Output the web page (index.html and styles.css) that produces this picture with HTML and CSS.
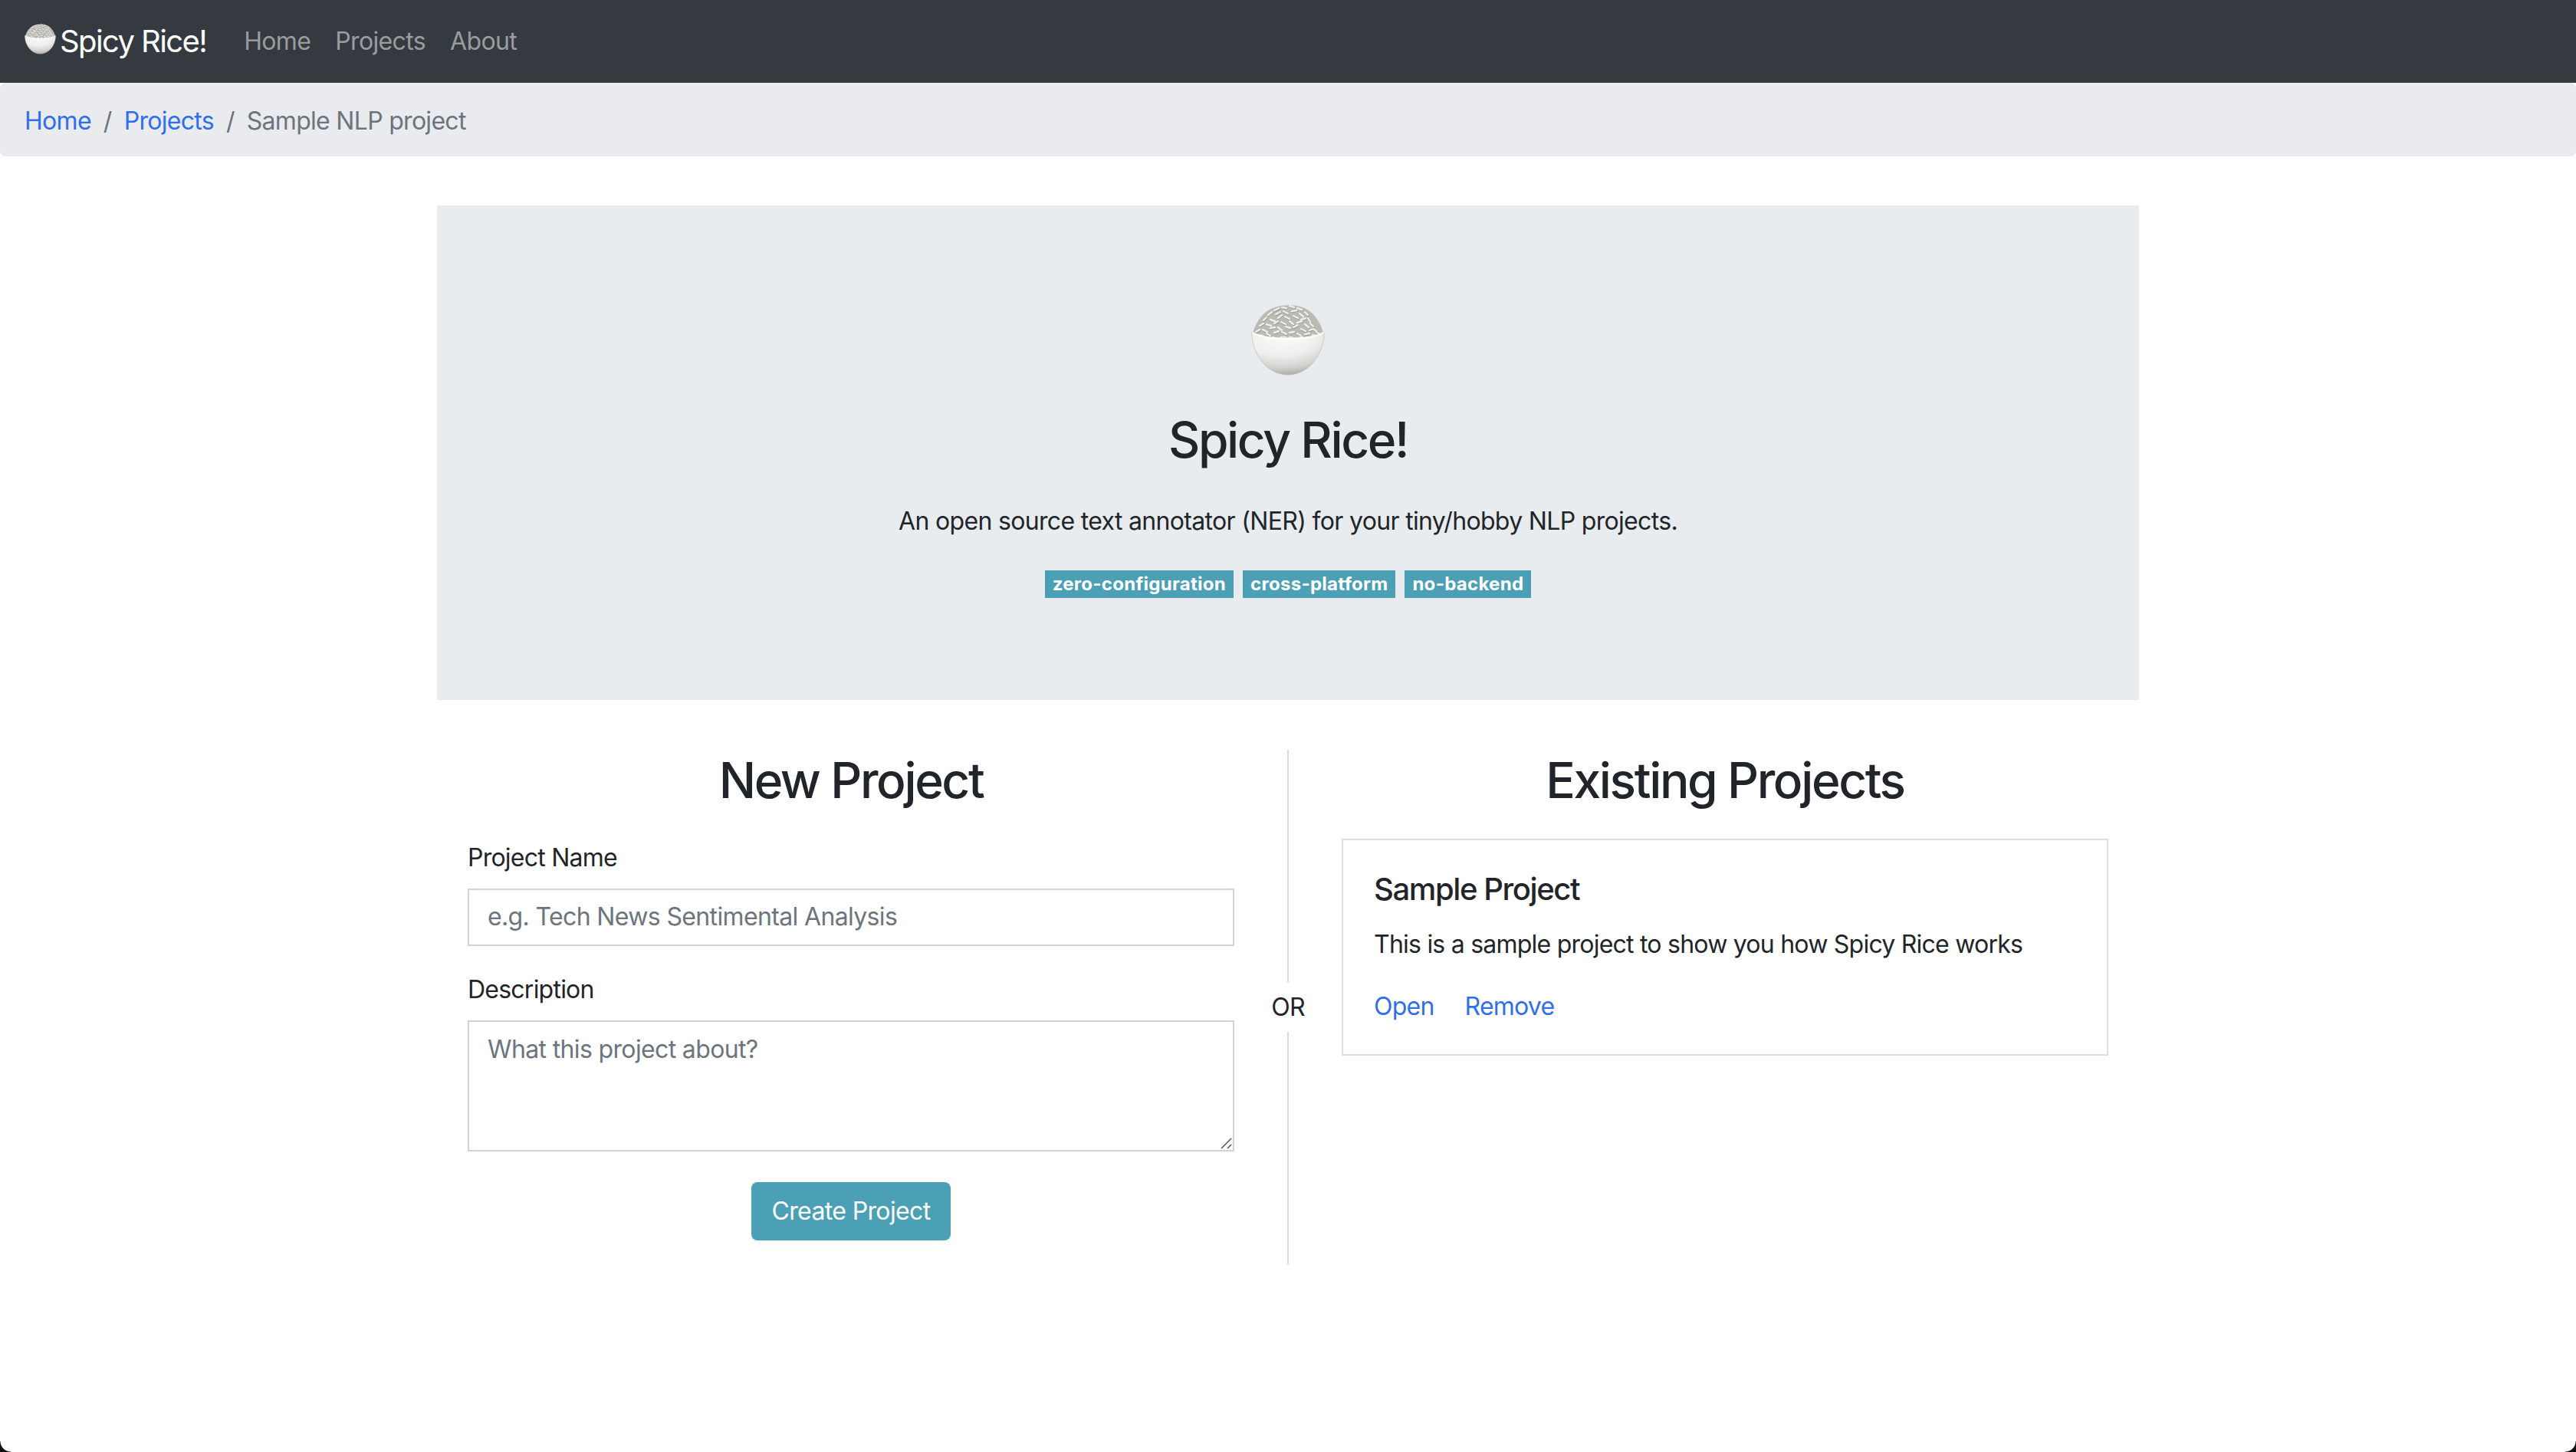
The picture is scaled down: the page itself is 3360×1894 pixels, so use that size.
FILE: index.html
```html
<!DOCTYPE html>
<html lang="en">
<head>
    <meta charset="UTF-8">
    <meta name="viewport" content="width=device-width, initial-scale=1.0">
    <title>Spicy Rice!</title>
    <link rel="stylesheet" href="styles.css">
</head>
<body>

    <!-- rice bowl drawn once, used in the navbar and the jumbotron -->
    <svg class="icon-defs" aria-hidden="true">
        <defs>
            <radialGradient id="bowlFill" cx="0.42" cy="0.05" r="1">
                <stop offset="0" stop-color="#fcfcfb"/>
                <stop offset="0.5" stop-color="#efefed"/>
                <stop offset="0.78" stop-color="#d3d2cf"/>
                <stop offset="1" stop-color="#a3a29f"/>
            </radialGradient>
            <path id="grains" d="M42 15l6 -3M52 11l6 1M62 9l6 2M72 12l6 2M82 17l4 4M34 21l5 -4M44 20l6 -3M54 16l6 3M65 16l6 -1M75 19l5 4M86 25l3 5M28 28l4 -4M37 27l6 2M47 25l5 -4M56 23l6 3M67 22l6 3M77 27l6 -2M89 32l4 4M23 35l5 -3M32 33l6 2M42 32l5 -3M51 30l6 3M62 29l5 4M72 31l6 -2M82 33l5 4M93 39l4 3M18 43l5 -3M27 40l6 3M37 38l6 -1M47 37l5 4M57 36l6 2M67 37l6 -3M77 39l6 3M88 41l5 -2M98 44l4 2M22 47l6 1M32 45l5 3M42 44l6 -2M52 43l6 3M62 44l6 -1M72 45l5 3M82 46l6 -1M92 47l4 1M30 51l6 0M40 50l6 2M51 50l6 0M62 50l6 1M73 51l6 -1M84 50l5 0"/>
            <symbol id="riceBowl" viewBox="0 0 120 110">
                <path d="M14 44C17 36 20 27 30 18C38 11 50 8 62 8C74 8 86 12 93 20C99 27 104 35 106 44L106 50L14 50Z" fill="#bcbab5"/>
                <use href="#grains" transform="translate(0.4 0.9)" fill="none" stroke="#96948e" stroke-width="2.4" stroke-linecap="round"/>
                <use href="#grains" fill="none" stroke="#eeedea" stroke-width="2.4" stroke-linecap="round"/>
                <path d="M13 43C30 54 90 54 107 43C108 70 88 99 60 99C32 99 12 70 13 43Z" fill="url(#bowlFill)" stroke="#c4c3c0" stroke-width="0.8"/>
                <path d="M13.5 43.5C30 54.5 90 54.5 106.5 43.5" fill="none" stroke="#ffffff" stroke-width="2"/>
            </symbol>
        </defs>
    </svg>

    <div id="page">
        <nav class="navbar">
            <a class="brand" href="#">
                <svg class="brand-icon"><use href="#riceBowl"/></svg>
                <span>Spicy Rice!</span>
            </a>
            <ul class="nav-links">
                <li><a href="#">Home</a></li>
                <li><a href="#">Projects</a></li>
                <li><a href="#">About</a></li>
            </ul>
        </nav>

        <ol class="breadcrumb">
            <li><a href="#">Home</a></li>
            <li class="sep">/</li>
            <li><a href="#">Projects</a></li>
            <li class="sep">/</li>
            <li class="active">Sample NLP project</li>
        </ol>

        <div class="container">
            <div class="jumbotron">
                <svg class="hero-icon"><use href="#riceBowl"/></svg>
                <h2>Spicy Rice!</h2>
                <p>An open source text annotator (NER) for your tiny/hobby NLP projects.</p>
                <div class="badges">
                    <span class="badge">zero-configuration</span>
                    <span class="badge">cross-platform</span>
                    <span class="badge">no-backend</span>
                </div>
            </div>

            <div class="split">
                <form class="col">
                    <h2>New Project</h2>
                    <label for="projectName">Project Name</label>
                    <input type="text" id="projectName" placeholder="e.g. Tech News Sentimental Analysis">
                    <label for="projectDesc">Description</label>
                    <div class="textarea-wrap">
                        <textarea id="projectDesc" rows="3" placeholder="What this project about?"></textarea>
                        <svg class="resize-handle" viewBox="0 0 15 15">
                            <path d="M1 14L14 1M9 14L14 9"/>
                        </svg>
                    </div>
                    <div class="actions">
                        <button type="button">Create Project</button>
                    </div>
                </form>

                <div class="divider"><span>OR</span></div>

                <div class="col col-existing">
                    <h2>Existing Projects</h2>
                    <div class="card">
                        <h5>Sample Project</h5>
                        <p>This is a sample project to show you how Spicy Rice works</p>
                        <div class="card-links">
                            <a href="#">Open</a>
                            <a href="#">Remove</a>
                        </div>
                    </div>
                </div>
            </div>
        </div>

        <!-- rounded window corners of the screenshot -->
        <span class="corner corner-left"></span>
        <span class="corner corner-right"></span>
    </div>

</body>
</html>
```

FILE: styles.css
```css
* {
    box-sizing: border-box;
}

body {
    margin: 0;
    font-family: Inter, "Noto Sans", sans-serif;
    font-size: 32px;
    line-height: 48px;
    letter-spacing: -0.024em;
    color: #212529;
    background-color: #fff;
}

a {
    color: #2f6fed;
    text-decoration: none;
}

ul, ol {
    list-style: none;
    margin: 0;
    padding: 0;
}

h2 {
    margin: 0;
    font-size: 64px;
    line-height: 77px;
    font-weight: 500;
    letter-spacing: -0.037em;
    text-align: center;
}

.icon-defs {
    position: absolute;
    width: 0;
    height: 0;
}

#page {
    position: relative;
    height: 1894px;
    overflow: hidden;
}

.navbar {
    display: flex;
    align-items: center;
    height: 108px;
    padding: 0 27px;
    background-color: #343a40;
}

.brand {
    display: flex;
    align-items: center;
    margin-right: 33px;
    font-size: 40px;
    letter-spacing: -0.04em;
    color: #fff;
}

.brand-icon {
    width: 51px;
    height: 47px;
    margin-top: -6px;
}

.nav-links {
    display: flex;
    letter-spacing: -0.02em;
}

.nav-links a {
    display: block;
    padding: 0 16px;
    color: #9a9c9f;
}

.breadcrumb {
    display: flex;
    height: 96px;
    padding: 26px 32px 22px;
    background-color: #e9ebef;
    border-radius: 8px;
    color: #6c757d;
    letter-spacing: -0.022em;
}

.breadcrumb .sep {
    padding: 0 16px;
}

.container {
    width: 2280px;
    margin: 64px auto 0;
    padding: 0 30px;
}

.jumbotron {
    height: 645px;
    padding-top: 122px;
    margin-bottom: 65px;
    background-color: #e9ecef;
    text-align: center;
}

.hero-icon {
    display: block;
    width: 120px;
    height: 110px;
    margin: 0 auto 35px;
}

.jumbotron p {
    margin: 44px 0 40px;
    letter-spacing: -0.021em;
}

.badges {
    display: flex;
    justify-content: center;
    gap: 12px;
}

.badge {
    padding: 0 10px;
    font-size: 24px;
    line-height: 36px;
    font-weight: 700;
    letter-spacing: 0.012em;
    color: #fff;
    background-color: #4ba0b5;
}

.split {
    display: grid;
    grid-template-columns: 1fr 60px 1fr;
}

.col {
    padding: 0 40px;
}

.col h2 {
    padding-top: 1px;
    margin-bottom: 39px;
}

.col-existing h2 {
    margin-bottom: 38px;
}

label {
    display: block;
    margin-bottom: 16px;
}

input, textarea {
    display: block;
    width: 100%;
    padding: 11px 24px 13px;
    font: inherit;
    letter-spacing: -0.02em;
    color: #495057;
    background-color: #fff;
    border: 2px solid #ced4da;
    border-radius: 0;
}

input {
    height: 75px;
    margin-bottom: 33px;
}

textarea {
    height: 171px;
    padding-top: 12px;
    resize: none;
}

.textarea-wrap {
    position: relative;
    margin-bottom: 40px;
}

.resize-handle {
    position: absolute;
    right: 3px;
    bottom: 3px;
    width: 15px;
    height: 15px;
}

.resize-handle path {
    fill: none;
    stroke: #555;
    stroke-width: 1.5;
}

input::placeholder, textarea::placeholder {
    color: #6c757d;
    opacity: 1;
}

.actions {
    text-align: center;
    padding-bottom: 32px;
}

button {
    height: 76px;
    padding: 0 27px;
    font: inherit;
    letter-spacing: -0.02em;
    color: #fff;
    background-color: #4ba0b5;
    border: none;
    border-radius: 8px;
    cursor: pointer;
}

.divider {
    position: relative;
    display: flex;
    align-items: center;
    justify-content: center;
}

.divider::before {
    content: "";
    position: absolute;
    top: 0;
    bottom: 0;
    left: 29px;
    width: 2px;
    background-color: #dcdcdc;
}

.divider span {
    position: relative;
    padding: 8px 0;
    background-color: #fff;
}

.card {
    padding: 40px 40px 38px;
    border: 2px solid #dfdfdf;
}

.card h5 {
    margin: 0 0 24px;
    font-size: 40px;
    line-height: 48px;
    font-weight: 500;
    letter-spacing: -0.035em;
}

.card p {
    margin: 0 0 33px;
}

.card-links {
    display: flex;
    gap: 40px;
}

.corner {
    position: absolute;
    bottom: 0;
    width: 14px;
    height: 14px;
}

.corner-left {
    left: 0;
    background: radial-gradient(circle at 100% 0, transparent 13px, #111 14px);
}

.corner-right {
    right: 0;
    background: radial-gradient(circle at 0 0, transparent 13px, #111 14px);
}
```
